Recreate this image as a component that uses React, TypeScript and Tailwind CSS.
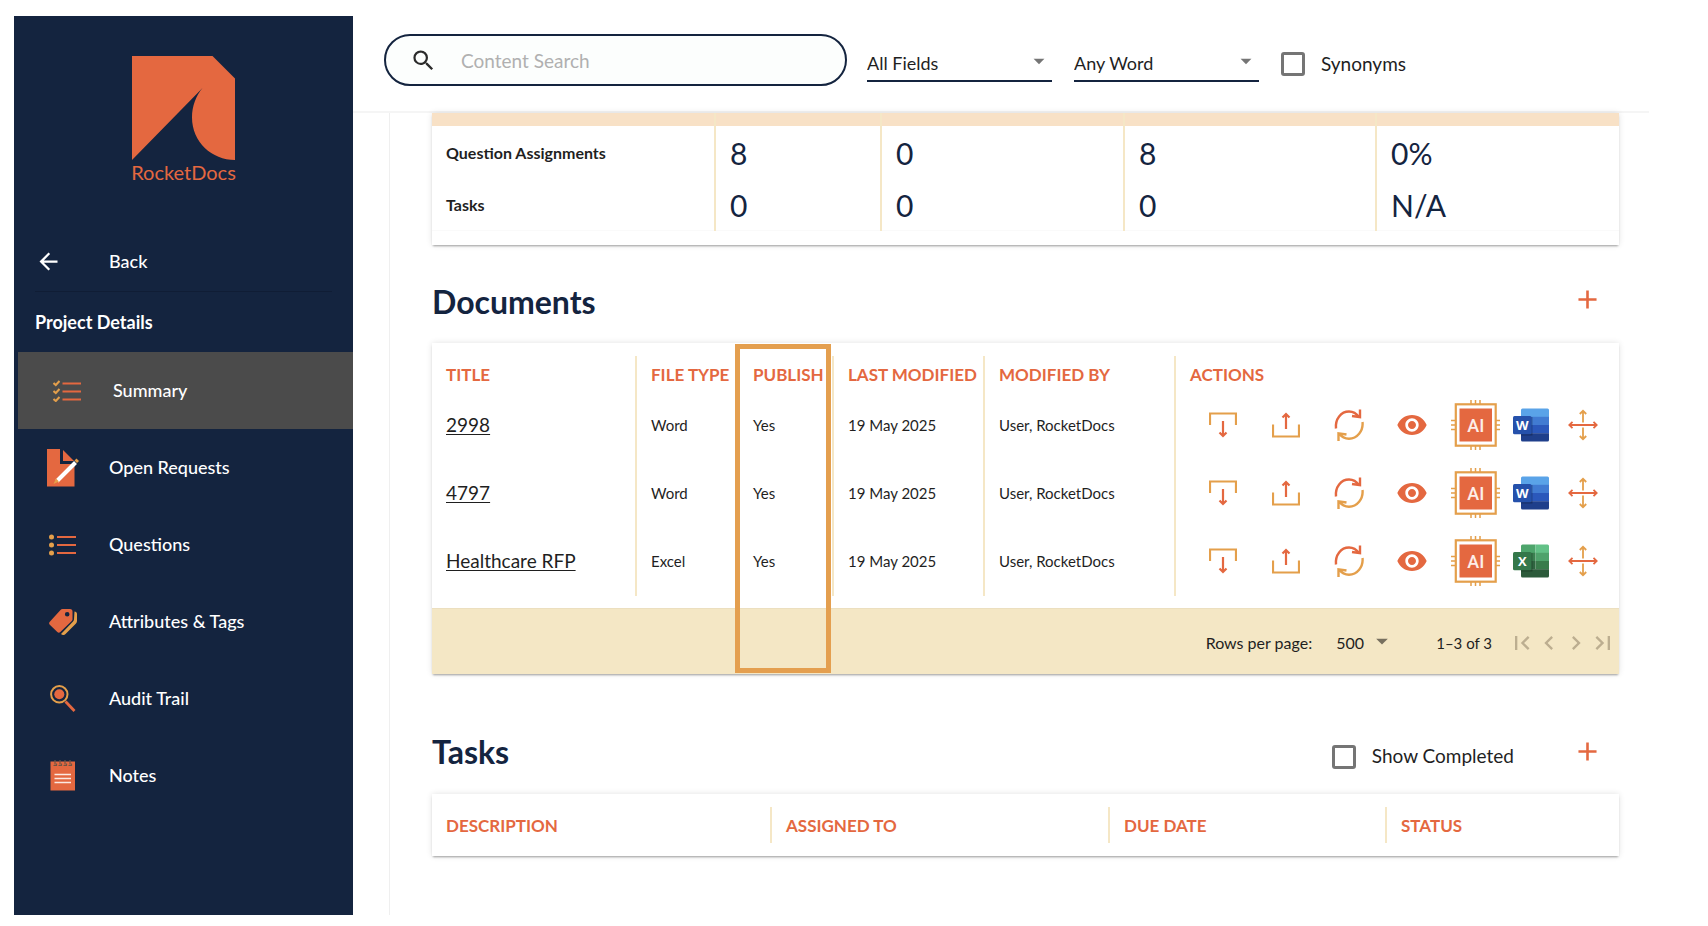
import type { ReactNode } from "react";
import {
  MdAdd,
  MdArrowBack,
  MdArrowDropDown,
  MdChevronLeft,
  MdChevronRight,
  MdFirstPage,
  MdLastPage,
  MdSearch,
  MdVisibility,
} from "react-icons/md";

const ORANGE = "#e46840";
const GOLD = "#e49f4b";

function Logo() {
  return (
    <svg width="103" height="104" viewBox="0 0 103 104" aria-hidden="true">
      <path
        d="M0 0H80.500L103 22.500V104C80 104 60 86 60 61.500C60 50 64 40 70.500 32L0 104Z"
        fill={ORANGE}
      />
    </svg>
  );
}

function SummaryIcon() {
  return (
    <svg width="28" height="22" viewBox="0 0 28 22" fill="none" aria-hidden="true">
      <path d="M.5 3l2.300 2L6.500 1M.5 11l2.300 2L6.500 9M.5 19l2.300 2L6.500 17" stroke={GOLD} strokeWidth="2" />
      <path d="M9.500 3.500H28M9.500 11.500H28M9.500 19.500H28" stroke={ORANGE} strokeWidth="2.200" />
    </svg>
  );
}

function RequestsIcon() {
  return (
    <svg width="32" height="38" viewBox="0 0 32 38" aria-hidden="true">
      <path d="M0 0H13V15H27.500V37.500H0Z" fill={ORANGE} />
      <path d="M16 1L27 12H16Z" fill={ORANGE} />
      <path d="M10 32L28.500 13.500" stroke="#fff" strokeWidth="4" />
      <path d="M27.500 11.500l2-2 2.500 2.500-2 2zM9 29.500l3 3-5.500 2.500z" fill={GOLD} />
    </svg>
  );
}

function QuestionsIcon() {
  return (
    <svg width="28" height="22" viewBox="0 0 28 22" aria-hidden="true">
      <g fill={GOLD}>
        <circle cx="2.500" cy="3" r="2.500" />
        <circle cx="2.500" cy="11" r="2.500" />
        <circle cx="2.500" cy="19" r="2.500" />
      </g>
      <path d="M8 3H27M8 11H27M8 19H27" stroke={ORANGE} strokeWidth="2.200" />
    </svg>
  );
}

function TagsIcon() {
  return (
    <svg width="28" height="26" viewBox="0 0 28 26" aria-hidden="true">
      <path
        d="M25.500 2.500c1.500 0 2.500 1 2.500 2.500v7c0 1-.3 1.800-1 2.500L16.500 25c-1.500 1.500-3 1.200-4.500 0L24 12.500c.6-.6 1-1.300 1-2.200z"
        fill={GOLD}
      />
      <path
        fillRule="evenodd"
        d="M13.500 0H21a2.500 2.500 0 0 1 2.500 2.500v7.500c0 1-.3 1.600-1 2.300L11.300 23a2.200 2.200 0 0 1-3 0L.8 15.800a2.200 2.200 0 0 1 0-3L11.500 1c.6-.7 1.200-1 2-1zM18.200 3a2.300 2.300 0 1 0 0 4.600a2.300 2.300 0 0 0 0-4.600z"
        fill={ORANGE}
      />
    </svg>
  );
}

function AuditIcon() {
  return (
    <svg width="26" height="27" viewBox="0 0 26 27" fill="none" aria-hidden="true">
      <circle cx="9.300" cy="9.300" r="8.200" stroke={GOLD} strokeWidth="2" />
      <circle cx="9.300" cy="9.300" r="5" fill={ORANGE} />
      <path d="M15.500 16.500L24.500 26" stroke={ORANGE} strokeWidth="2.800" />
    </svg>
  );
}

function NotesIcon() {
  return (
    <svg width="26" height="31" viewBox="0 0 26 31" fill="none" aria-hidden="true">
      <path d="M.5 1.500H25V30.500H.5Z" fill={ORANGE} />
      <path
        d="M5 0v4.500M10 0v4.500M15 0v4.500M20 0v4.500M3.500 5.500h3v-2M8.500 5.500h3v-2M13.500 5.500h3v-2M18.500 5.500h3v-2"
        stroke="#6f5545"
        strokeWidth="1.200"
      />
      <path d="M4.500 14.500H21M4.500 18.500H21M4.500 22.500H21" stroke="#fbe9e2" strokeWidth="1.400" />
    </svg>
  );
}

function DownloadIcon() {
  return (
    <svg width="28" height="26" viewBox="0 0 28 26" fill="none" aria-hidden="true">
      <path d="M1 13V1.500H27V13" stroke={GOLD} strokeWidth="2.200" />
      <path d="M14 9V24M10.500 20.500L14 24L17.500 20.500" stroke={ORANGE} strokeWidth="2.200" />
    </svg>
  );
}

function UploadIcon() {
  return (
    <svg width="28" height="26" viewBox="0 0 28 26" fill="none" aria-hidden="true">
      <path d="M1 12.500V24.500H27V12.500" stroke={GOLD} strokeWidth="2.200" />
      <path d="M14 17V2M10.500 5.500L14 2L17.500 5.500" stroke={ORANGE} strokeWidth="2.200" />
    </svg>
  );
}

function RefreshIcon() {
  return (
    <svg width="30" height="32" viewBox="0 0 30 32" fill="none" strokeWidth="2.400" aria-hidden="true">
      <path d="M2 19.500C1 10 7 2.500 15 2.500c4 0 7.500 2 9.800 5.500M26 .5V8.200L18 7" stroke={ORANGE} />
      <path d="M28.500 13C29.500 22 23 29.700 15 29.700c-4 0-7.500-2-9.800-5.200M4.500 32V24.300L12.500 25.500" stroke={GOLD} />
    </svg>
  );
}

function AiIcon() {
  return (
    <svg width="49" height="50" viewBox="0 0 49 50" fill="none" aria-hidden="true">
      <path
        d="M20 0V4M24.500 0V4M29 0V4M20 46V50M24.500 46V50M29 46V50M0 20.500H4M0 25H4M0 29.500H4M45 20.500H49M45 25H49M45 29.500H49"
        stroke={GOLD}
        strokeWidth="1.500"
      />
      <rect x="4.800" y="4.300" width="39.900" height="41.400" stroke={GOLD} strokeWidth="2.200" />
      <rect x="8.500" y="8.500" width="32.500" height="33" fill={ORANGE} />
      <text
        x="24.800"
        y="31.500"
        fill="#fdeee8"
        textAnchor="middle"
        fontSize="18"
        fontFamily="Roboto, sans-serif"
        fontWeight="500"
      >
        AI
      </text>
    </svg>
  );
}

function WordIcon() {
  return (
    <svg width="36" height="34" viewBox="0 0 36 34" aria-hidden="true">
      <clipPath id="word-page">
        <rect x="8" y="0.500" width="28" height="33" rx="1.500" />
      </clipPath>
      <g clipPath="url(#word-page)">
        <rect x="8" width="28" height="9" fill="#5aa3e8" />
        <rect x="8" y="8.800" width="28" height="8.200" fill="#417bd2" />
        <rect x="8" y="17" width="28" height="8.300" fill="#2b58bb" />
        <rect x="8" y="25.200" width="28" height="9" fill="#1f3f8b" />
        <path d="M8 9H19.500V27.500H8Z" fill="#000" opacity="0.250" />
      </g>
      <rect y="8" width="18.500" height="18.300" rx="1.500" fill="#2551ab" />
      <text x="9.300" y="21.800" fill="#fff" textAnchor="middle" fontSize="13" fontWeight="700" fontFamily="'Open Sans', sans-serif">
        W
      </text>
    </svg>
  );
}

function ExcelIcon() {
  return (
    <svg width="36" height="34" viewBox="0 0 36 34" aria-hidden="true">
      <clipPath id="excel-page">
        <rect x="8" y="0.500" width="28" height="33" rx="1.500" />
      </clipPath>
      <g clipPath="url(#excel-page)">
        <rect x="8" width="14.500" height="9" fill="#4ea56c" />
        <rect x="22.500" width="13.500" height="9" fill="#63c187" />
        <rect x="8" y="8.800" width="14.500" height="8.200" fill="#3b7f50" />
        <rect x="22.500" y="8.800" width="13.500" height="8.200" fill="#4fa26b" />
        <rect x="8" y="17" width="14.500" height="8.300" fill="#2f6440" />
        <rect x="22.500" y="17" width="13.500" height="8.300" fill="#397b4b" />
        <rect x="8" y="25.200" width="28" height="9" fill="#2c5a3a" />
        <path d="M8 9H19.500V27.500H8Z" fill="#000" opacity="0.250" />
      </g>
      <rect y="8" width="18.500" height="18.300" rx="1.500" fill="#34784a" />
      <text x="9.300" y="21.800" fill="#fff" textAnchor="middle" fontSize="13" fontWeight="700" fontFamily="'Open Sans', sans-serif">
        X
      </text>
    </svg>
  );
}

function MoveIcon() {
  return (
    <svg width="30" height="32" viewBox="0 0 30 32" fill="none" strokeWidth="1.800" aria-hidden="true">
      <path d="M15 13.500V2M11.800 5L15 1.800L18.200 5M15 18.500V30M11.800 27L15 30.200L18.200 27" stroke={GOLD} />
      <path d="M1 16H29M4.500 12.800L1.300 16L4.500 19.200M25.500 12.800L28.700 16L25.500 19.200" stroke={ORANGE} />
    </svg>
  );
}

const navItems: { label: string; icon: ReactNode; active?: boolean }[] = [
  { label: "Summary", icon: <SummaryIcon />, active: true },
  { label: "Open Requests", icon: <RequestsIcon /> },
  { label: "Questions", icon: <QuestionsIcon /> },
  { label: "Attributes & Tags", icon: <TagsIcon /> },
  { label: "Audit Trail", icon: <AuditIcon /> },
  { label: "Notes", icon: <NotesIcon /> },
];

const stats = [
  { label: "Question Assignments", values: ["8", "0", "8", "0%"] },
  { label: "Tasks", values: ["0", "0", "0", "N/A"] },
];

const documents = [
  { title: "2998", type: "Word" },
  { title: "4797", type: "Word" },
  { title: "Healthcare RFP", type: "Excel" },
];

const cardShadow = "shadow-[0_2px_2px_-1px_rgba(0,0,0,0.35),0_0_6px_rgba(0,0,0,0.12)]";
const divider = "border-l-2 border-[#f5e7c6]";
const columnHead = "px-3.5 pt-0.5 text-left text-[17px] font-bold whitespace-nowrap text-[#e46840]";
const checkbox =
  "size-6 shrink-0 appearance-none rounded-[3px] border-[3px] border-[#757575] bg-white checked:bg-[#e46840]";

function Sidebar() {
  return (
    <aside className="flex w-[339px] shrink-0 flex-col bg-[#14243f] text-white">
      <div className="flex flex-col items-center pt-10">
        <Logo />
        <span className="text-[20px] leading-6 text-[#e46840]">RocketDocs</span>
      </div>
      <a href="#back" className="mt-10 flex h-[67px] items-center pt-2 pl-[21px] text-[18px] font-medium">
        <span className="w-[74px]">
          <MdArrowBack size={27} />
        </span>
        Back
      </a>
      <div className="mx-[21px] border-t border-[#101d35]" />
      <h2 className="flex h-[60px] items-center pl-[21px] text-[18px] font-bold">Project Details</h2>
      <nav className="flex flex-col">
        {navItems.map((item) => (
          <a
            key={item.label}
            href={`#${item.label}`}
            aria-current={item.active ? "page" : undefined}
            className={`flex h-[77px] items-center gap-[31px] pl-[34px] text-[18px] font-medium ${
              item.active ? "ml-1 bg-[#4b4b4b]" : ""
            }`}
          >
            <span className="flex w-[30px] justify-center *:shrink-0">{item.icon}</span>
            {item.label}
          </a>
        ))}
      </nav>
    </aside>
  );
}

function FieldSelect({ label, options }: { label: string; options: string[] }) {
  return (
    <div className="relative w-[185px]">
      <select
        aria-label={label}
        className="h-9 w-full appearance-none border-b-2 border-[#14243f] bg-transparent text-[18px] text-[#1f1f1f]"
      >
        {options.map((option) => (
          <option key={option}>{option}</option>
        ))}
      </select>
      <MdArrowDropDown size={26} className="pointer-events-none absolute top-0.5 right-0 text-[#757575]" />
    </div>
  );
}

function TopBar() {
  return (
    <header className="flex h-[97px] items-start border-b-2 border-[#f5f5f5] pt-[18px] pl-[31px]">
      <label className="flex h-[52px] w-[463px] items-center rounded-full border-2 border-[#14243f] bg-[#fcfefd] pl-6">
        <MdSearch size={27} className="text-[#2b2b2b]" />
        <input
          type="search"
          aria-label="Content Search"
          placeholder="Content Search"
          className="ml-6 min-w-0 flex-1 bg-transparent pt-0.5 text-[19px] outline-none placeholder:text-[#b0b0b0]"
        />
      </label>
      <div className="mt-3 ml-5 flex gap-[22px]">
        <FieldSelect label="Fields" options={["All Fields", "Title", "Answer"]} />
        <FieldSelect label="Match" options={["Any Word", "All Words", "Exact Phrase"]} />
        <label className="flex h-9 items-center gap-4 text-[19px] text-[#1f1f1f]">
          <input type="checkbox" className={checkbox} />
          Synonyms
        </label>
      </div>
    </header>
  );
}

function StatsCard() {
  return (
    <div className={`bg-white pb-3.5 ${cardShadow}`}>
      <table className="w-full table-fixed border-b border-[#fafafa]">
        <colgroup>
          <col className="w-[283px]" />
          <col className="w-[166px]" />
          <col className="w-[243px]" />
          <col className="w-[252px]" />
          <col className="w-[243px]" />
        </colgroup>
        <tbody>
          <tr className="h-[13px] bg-[#f8e1c6]">
            <td />
            <td className={divider} />
            <td className={divider} />
            <td className={divider} />
            <td className={divider} />
          </tr>
          {stats.map((row) => (
            <tr key={row.label} className="h-[52px]">
              <th scope="row" className="px-3.5 pt-0.5 text-left text-[16px] font-bold text-[#1f1f1f]">
                {row.label}
              </th>
              {row.values.map((value, index) => (
                <td key={index} className={`px-3.5 pt-0.5 text-[30px] leading-9 text-[#14243f] ${divider}`}>
                  {value}
                </td>
              ))}
            </tr>
          ))}
        </tbody>
      </table>
    </div>
  );
}

function AddButton({ label }: { label: string }) {
  return (
    <button type="button" aria-label={label} className="text-[#e46840]">
      <MdAdd size={31} />
    </button>
  );
}

function RowActions({ type }: { type: string }) {
  return (
    <div className="flex items-center pb-0.5 pl-[15px] *:flex *:shrink-0 *:justify-center">
      <button type="button" aria-label="Download" className="w-[63px]">
        <DownloadIcon />
      </button>
      <button type="button" aria-label="Upload" className="w-[63px]">
        <UploadIcon />
      </button>
      <button type="button" aria-label="Refresh" className="w-[63px]">
        <RefreshIcon />
      </button>
      <button type="button" aria-label="View" className="w-[63px] text-[#e46840]">
        <MdVisibility size={32} />
      </button>
      <button type="button" aria-label="AI" className="w-16">
        <AiIcon />
      </button>
      <button type="button" aria-label={`Open in ${type}`} className="w-12">
        {type === "Word" ? <WordIcon /> : <ExcelIcon />}
      </button>
      <button type="button" aria-label="Move" className="w-14">
        <MoveIcon />
      </button>
    </div>
  );
}

function DocumentsCard() {
  return (
    <div className={`bg-white pt-[13px] ${cardShadow}`}>
      <table className="w-full table-fixed text-[15px] text-[#1f1f1f]">
        <colgroup>
          <col className="w-[204px]" />
          <col className="w-[103px]" />
          <col className="w-[94px]" />
          <col className="w-[151px]" />
          <col className="w-[191px]" />
          <col className="w-[444px]" />
        </colgroup>
        <thead>
          <tr className="h-9">
            <th className={columnHead}>TITLE</th>
            <th className={`${columnHead} ${divider}`}>FILE TYPE</th>
            <th className={`relative ${columnHead}`}>
              PUBLISH
              <span className="pointer-events-none absolute -top-3 -left-1 h-[329px] w-24 border-[5px] border-[#e49f4f]" />
            </th>
            <th className={`${columnHead} ${divider}`}>LAST MODIFIED</th>
            <th className={`${columnHead} ${divider}`}>MODIFIED BY</th>
            <th className={`${columnHead} ${divider}`}>ACTIONS</th>
          </tr>
        </thead>
        <tbody>
          {documents.map((doc) => (
            <tr key={doc.title} className="h-[68px]">
              <td className="px-3.5 text-[19px]">
                <a href={`#${doc.title}`} className="underline underline-offset-2">
                  {doc.title}
                </a>
              </td>
              <td className={`px-3.5 ${divider}`}>{doc.type}</td>
              <td className="px-3.5">Yes</td>
              <td className={`px-3.5 ${divider}`}>19 May 2025</td>
              <td className={`px-3.5 ${divider}`}>User, RocketDocs</td>
              <td className={divider}>
                <RowActions type={doc.type} />
              </td>
            </tr>
          ))}
        </tbody>
      </table>
      <div className="mt-3 flex h-[66px] items-center justify-end border-t border-[#ecdfbf] bg-[#f4e7c5] pt-1 pr-[3px] text-[16px] text-[#1f1f1f]">
        <label htmlFor="rows-per-page">Rows per page:</label>
        <div className="relative ml-6 w-[60px]">
          <select id="rows-per-page" className="w-full appearance-none bg-transparent">
            <option>500</option>
            <option>100</option>
            <option>50</option>
          </select>
          <MdArrowDropDown size={28} className="pointer-events-none absolute -top-1 right-0 text-[#77705f]" />
        </div>
        <span className="ml-10 text-[15px]">1–3 of 3</span>
        <div className="ml-4 flex text-[#bcae90] *:flex *:w-[27px] *:justify-center">
          <button type="button" aria-label="First page">
            <MdFirstPage size={28} className="shrink-0" />
          </button>
          <button type="button" aria-label="Previous page">
            <MdChevronLeft size={28} className="shrink-0" />
          </button>
          <button type="button" aria-label="Next page">
            <MdChevronRight size={28} className="shrink-0" />
          </button>
          <button type="button" aria-label="Last page">
            <MdLastPage size={28} className="shrink-0" />
          </button>
        </div>
      </div>
    </div>
  );
}

function TasksCard() {
  return (
    <div className={`bg-white py-[13px] ${cardShadow}`}>
      <table className="w-full table-fixed">
        <colgroup>
          <col className="w-[339px]" />
          <col className="w-[338px]" />
          <col className="w-[277px]" />
          <col className="w-[233px]" />
        </colgroup>
        <thead>
          <tr className="h-9">
            <th className={columnHead}>DESCRIPTION</th>
            <th className={`${columnHead} ${divider}`}>ASSIGNED TO</th>
            <th className={`${columnHead} ${divider}`}>DUE DATE</th>
            <th className={`${columnHead} ${divider}`}>STATUS</th>
          </tr>
        </thead>
      </table>
    </div>
  );
}

export default function App() {
  return (
    <div className="flex min-h-screen bg-white pt-4 pr-[59px] pb-[11px] pl-3.5 font-['Lato','Open_Sans',sans-serif]">
      <Sidebar />
      <div className="flex min-w-0 flex-1 flex-col">
        <TopBar />
        <main className="ml-9 flex-1 border-l border-[#efefef] pr-[30px] pl-[42px]">
          <StatsCard />
          <section>
            <div className="flex h-[98px] items-center justify-between pt-3 pr-4">
              <h1 className="pt-1 text-[32px] font-bold text-[#14243f]">Documents</h1>
              <AddButton label="Add document" />
            </div>
            <DocumentsCard />
          </section>
          <section>
            <div className="flex h-[120px] items-center pt-9 pr-4">
              <h1 className="flex-1 text-[32px] font-bold text-[#14243f]">Tasks</h1>
              <label className="mr-[58px] flex items-center gap-4 pt-2.5 text-[19px] text-[#1f1f1f]">
                <input type="checkbox" className={checkbox} />
                Show Completed
              </label>
              <AddButton label="Add task" />
            </div>
            <TasksCard />
          </section>
        </main>
      </div>
    </div>
  );
}
